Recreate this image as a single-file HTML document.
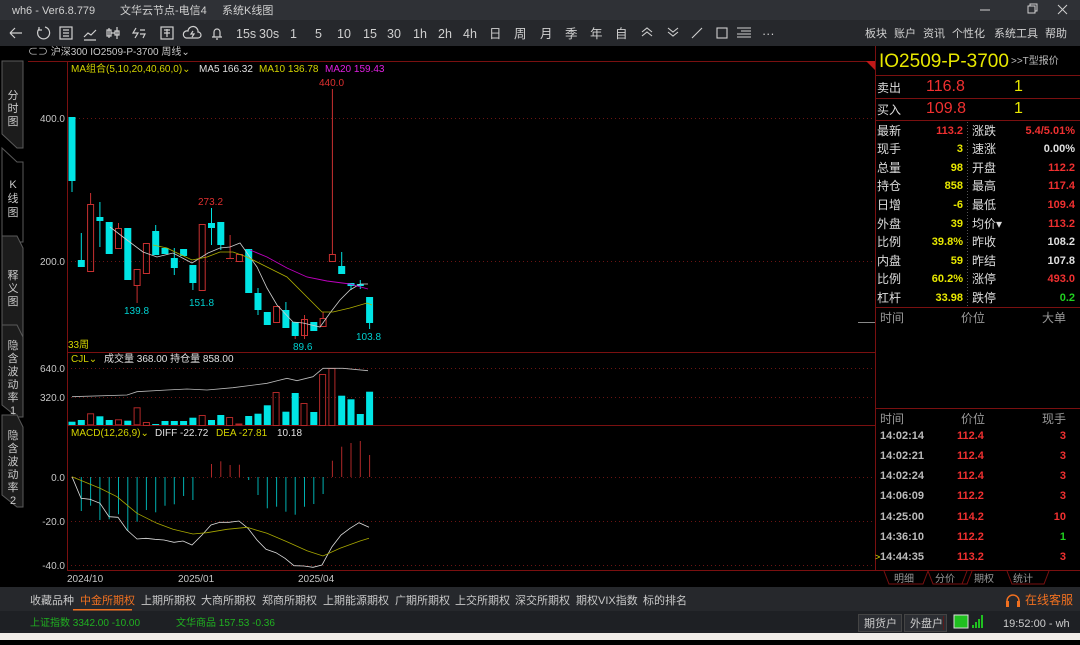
<!DOCTYPE html>
<html><head><meta charset="utf-8"><style>
body{margin:0;width:1080px;height:640px;overflow:hidden;background:#000;font-family:"Liberation Sans","Noto Sans CJK SC",sans-serif}
svg text{font-family:"Liberation Sans","Noto Sans CJK SC",sans-serif}
</style></head><body>
<svg width="1080" height="640" viewBox="0 0 1080 640" xmlns="http://www.w3.org/2000/svg">
<!-- title bar -->
<rect x="0" y="0" width="1080" height="20" fill="#2f3136"/>
<g fill="#d0d0d0" font-size="11">
<text x="12" y="14">wh6  -  Ver6.8.779</text>
<text x="120" y="14">文华云节点-电信4</text>
<text x="222" y="14">系统K线图</text>
</g>
<g stroke="#d0d0d0" fill="none" stroke-width="1">
<line x1="980" y1="10" x2="990" y2="10"/>
<rect x="1028" y="6" width="7" height="7"/><path d="M1030 6V4h7v7h-2"/>
<path d="M1058 5l9 9M1067 5l-9 9"/>
</g>
<!-- toolbar -->
<rect x="0" y="20" width="1080" height="26" fill="#26282c"/>
<g stroke="#d0d0d0" fill="none" stroke-width="1.2">
<path d="M10 33h12M10 33l5-5M10 33l5 5"/>
<path d="M45 27a6 6 0 1 1-6 2M39 27v3h3"/>
<rect x="60" y="27" width="12" height="12"/><path d="M63 30h6M63 33h6M63 36h6"/>
<path d="M84 37l4-4 3 2 5-5M84 40h12"/>
<path d="M109 28v10M107 30h4v6h-4zM117 27v12M115 31h4v4h-4zM111 33h4"/>
<path d="M136 28l-3 5h5l-3 5M140 30h5M140 34h5l-2 4"/>
<rect x="161" y="27" width="12" height="12"/><path d="M164 33h6M167 29v8M164 30h6"/>
<path d="M186 38h12a3 3 0 0 0 0-6 5 5 0 0 0-10-1 3 3 0 0 0-2 7M193 31l-2 3h3l-2 3"/>
<path d="M212 37h10M214 37v-5a3 3 0 0 1 6 0v5M216 39h2"/>
</g>
<g fill="#d0d0d0" font-size="12.5">
<text x="236" y="38">15s</text><text x="259" y="38">30s</text><text x="290" y="38">1</text><text x="315" y="38">5</text>
<text x="337" y="38">10</text><text x="363" y="38">15</text><text x="387" y="38">30</text><text x="413" y="38">1h</text>
<text x="438" y="38">2h</text><text x="463" y="38">4h</text><text x="489" y="38">日</text><text x="514" y="38">周</text>
<text x="540" y="38">月</text><text x="565" y="38">季</text><text x="590" y="38">年</text><text x="615" y="38">自</text>
<text x="762" y="38">···</text>
</g>
<g stroke="#d0d0d0" fill="none" stroke-width="1.1">
<path d="M642 32l5-4 5 4M642 36l5-4 5 4"/><path d="M668 28l5 4 5-4M668 32l5 4 5-4"/>
<path d="M692 38l10-10"/><rect x="717" y="28" width="10" height="10"/><path d="M737 28h14M741 31h10M737 34h14M737 37h14"/>
</g>
<g fill="#d0d0d0" font-size="11">
<text x="865" y="37">板块</text><text x="894" y="37">账户</text><text x="923" y="37">资讯</text><text x="952" y="37">个性化</text><text x="994" y="37">系统工具</text><text x="1045" y="37">帮助</text>
</g>
<!-- left tabs -->
<g stroke="#5a5a5a" fill="#1c1c1c" stroke-width="1">
<path d="M2 61h21v87h-6l-15-14z"/>
<path d="M2 148l15 14h6v80l-21 0z" fill="#000"/>
<path d="M2 236l0 90 15 12h6v-90l-6-12z"/>
<path d="M2 325v80l15 12h6v-80l-6-12z"/>
<path d="M2 415v80l15 12h6v-80l-6-12z"/>
</g>
<g fill="#c8c8c8" font-size="11" text-anchor="middle">
<text x="13" y="99">分</text><text x="13" y="112">时</text><text x="13" y="125">图</text>
<text x="13" y="188">K</text><text x="13" y="202">线</text><text x="13" y="216">图</text>
<text x="13" y="279">释</text><text x="13" y="292">义</text><text x="13" y="305">图</text>
<text x="13" y="349">隐</text><text x="13" y="362">含</text><text x="13" y="375">波</text><text x="13" y="388">动</text><text x="13" y="401">率</text><text x="13" y="414">1</text>
<text x="13" y="439">隐</text><text x="13" y="452">含</text><text x="13" y="465">波</text><text x="13" y="478">动</text><text x="13" y="491">率</text><text x="13" y="504">2</text>
</g>
<!-- chart frame -->
<g stroke="#7a1010" fill="none" stroke-width="1">
<line x1="28" y1="61.5" x2="875" y2="61.5"/>
<line x1="67.5" y1="61" x2="67.5" y2="571"/>
<line x1="67" y1="352.5" x2="875" y2="352.5"/>
<line x1="67" y1="425.5" x2="875" y2="425.5"/>
<line x1="67" y1="570.5" x2="875" y2="570.5"/>
<line x1="875.5" y1="46" x2="875.5" y2="571"/>
</g>
<path d="M866 61h9v9z" fill="#c01818"/>
<g stroke="#6a1414" stroke-dasharray="1 3" stroke-width="1">
<line x1="67" y1="118.5" x2="875" y2="118.5"/><line x1="67" y1="261.5" x2="875" y2="261.5"/>
<line x1="67" y1="368.5" x2="875" y2="368.5"/><line x1="67" y1="397.5" x2="875" y2="397.5"/>
<line x1="67" y1="477.5" x2="875" y2="477.5"/><line x1="67" y1="521.5" x2="875" y2="521.5"/><line x1="67" y1="565.5" x2="875" y2="565.5"/>
</g>
<line x1="858" y1="322.5" x2="875" y2="322.5" stroke="#888"/>
<g fill="#c8c8c8" font-size="10" text-anchor="end">
<text x="65" y="122">400.0</text><text x="65" y="265">200.0</text><text x="65" y="372">640.0</text><text x="65" y="401">320.0</text>
<text x="65" y="481">0.0</text><text x="65" y="525">-20.0</text><text x="65" y="569">-40.0</text>
</g>
<g fill="#c8c8c8" font-size="10"><text x="67" y="582">2024/10</text><text x="178" y="582">2025/01</text><text x="298" y="582">2025/04</text></g>
<g font-size="10">
<text x="28" y="55" fill="#c8c8c8">⊂⊃ 沪深300  IO2509-P-3700   周线⌄</text>
<text x="71" y="72" fill="#d4d400">MA组合(5,10,20,40,60,0)⌄</text>
<text x="199" y="72" fill="#e0e0e0">MA5 166.32</text>
<text x="259" y="72" fill="#d4d400">MA10 136.78</text>
<text x="325" y="72" fill="#e020e0">MA20 159.43</text>
<text x="68" y="348" fill="#d4d400">33周</text>
<text x="71" y="362" fill="#d4d400">CJL⌄</text><text x="104" y="362" fill="#e0e0e0">成交量 368.00  持仓量 858.00</text>
<text x="71" y="436" fill="#d4d400">MACD(12,26,9)⌄</text><text x="155" y="436" fill="#e0e0e0">DIFF -22.72</text>
<text x="216" y="436" fill="#d4d400">DEA -27.81</text><text x="277" y="436" fill="#e0e0e0">10.18</text>
<text x="319" y="86" fill="#e03030">440.0</text><text x="198" y="205" fill="#e03030">273.2</text>
<text x="124" y="314" fill="#00d0d0">139.8</text><text x="189" y="306" fill="#00d0d0">151.8</text>
<text x="293" y="350" fill="#00d0d0">89.6</text><text x="356" y="340" fill="#00d0d0">103.8</text>
</g>
<!-- wicks -->
<g stroke-width="1">
<g stroke="#00e0e0">
<line x1="72" y1="117" x2="72" y2="192"/><line x1="81.3" y1="233" x2="81.3" y2="260"/><line x1="99.9" y1="202" x2="99.9" y2="247"/>
<line x1="155.7" y1="225" x2="155.7" y2="240"/><line x1="174.3" y1="248" x2="174.3" y2="275"/><line x1="192.9" y1="283" x2="192.9" y2="290"/>
<line x1="211.5" y1="208" x2="211.5" y2="245"/><line x1="220.8" y1="245" x2="220.8" y2="250"/>
<line x1="258" y1="288" x2="258" y2="315"/><line x1="285.9" y1="302" x2="285.9" y2="310"/><line x1="341.7" y1="252" x2="341.7" y2="266"/>
<line x1="351" y1="283" x2="351" y2="290"/><line x1="360.3" y1="280" x2="360.3" y2="289"/><line x1="369.6" y1="323" x2="369.6" y2="329"/>
</g>
<g stroke="#c83030">
<line x1="90.6" y1="193" x2="90.6" y2="204"/><line x1="118.5" y1="223" x2="118.5" y2="228"/><line x1="137.1" y1="285" x2="137.1" y2="303"/>
<line x1="230.1" y1="235" x2="230.1" y2="258"/><line x1="295.2" y1="336" x2="295.2" y2="339"/><line x1="304.5" y1="315" x2="304.5" y2="339"/>
<line x1="323.1" y1="312" x2="323.1" y2="318"/><line x1="332.4" y1="89" x2="332.4" y2="254"/>
</g>
</g>
<!-- cyan bodies -->
<g fill="#00e5e5">
<rect x="68.5" y="117" width="7" height="64"/><rect x="77.8" y="260" width="7" height="7"/><rect x="96.4" y="217" width="7" height="4"/>
<rect x="105.7" y="222" width="7" height="32"/><rect x="124.3" y="228" width="7" height="52"/><rect x="152.2" y="231" width="7" height="24"/>
<rect x="161.5" y="248" width="7" height="6"/><rect x="170.8" y="258" width="7" height="10"/><rect x="180.1" y="249" width="7" height="7"/>
<rect x="189.4" y="265" width="7" height="18"/><rect x="208" y="223" width="7" height="5"/><rect x="217.3" y="222" width="7" height="23"/>
<rect x="245.2" y="249" width="7" height="44"/><rect x="254.5" y="293" width="7" height="17"/><rect x="263.8" y="312" width="7" height="13"/>
<rect x="282.4" y="310" width="7" height="18"/><rect x="291.7" y="322" width="7" height="14"/><rect x="310.3" y="322" width="7" height="9"/>
<rect x="338.2" y="266" width="7" height="8"/><rect x="347.5" y="283" width="7" height="3"/><rect x="356.8" y="284" width="7" height="2"/>
<rect x="366.1" y="297" width="7" height="26"/>
</g>
<g fill="none" stroke="#c83030">
<rect x="87.6" y="204.5" width="6" height="67"/><rect x="115.5" y="228.5" width="6" height="20"/><rect x="134.1" y="269.5" width="6" height="16"/>
<rect x="143.4" y="243.5" width="6" height="30"/><rect x="199.2" y="224.5" width="6" height="66"/><line x1="226" y1="258.5" x2="234" y2="258.5"/>
<rect x="236.4" y="254.5" width="6" height="7"/><rect x="273.6" y="306.5" width="6" height="16"/><rect x="301.5" y="319.5" width="6" height="16"/>
<rect x="320.1" y="318.5" width="6" height="8"/><rect x="329.4" y="254.5" width="6" height="7"/>
</g>
<!-- MAs -->
<polyline fill="none" stroke="#cfcfcf" stroke-width="0.8" points="110,227 127,240 143,252 157,257 173,253 192,263 208,253 220,248 230,247 240,243 257,267 267,288 277,305 293,322 303,323 320,327 330,313 340,300 350,290 360,284 368,284"/>
<polyline fill="none" stroke="#b0b000" stroke-width="0.8" points="153,245 167,248 175,252 192,260 207,257 220,252 233,252 247,257 267,267 287,277 307,297 322,312 333,312 350,308 367,303 372,305"/>
<polyline fill="none" stroke="#c000c0" stroke-width="0.9" points="250,250 267,257 287,268 307,277 327,281 350,284 368,289"/>
<!-- volume -->
<g fill="#00e5e5">
<rect x="68.5" y="421.7" width="7" height="3.3"/><rect x="77.8" y="420" width="7" height="5"/><rect x="96.4" y="416.3" width="7" height="8.7"/>
<rect x="105.7" y="420" width="7" height="5"/><rect x="124.3" y="420.7" width="7" height="4.3"/><rect x="152.2" y="424" width="7" height="1"/>
<rect x="161.5" y="421" width="7" height="4"/><rect x="170.8" y="421" width="7" height="4"/><rect x="180.1" y="421" width="7" height="4"/>
<rect x="189.4" y="417.7" width="7" height="7.3"/><rect x="208" y="420" width="7" height="5"/><rect x="217.3" y="415" width="7" height="10"/>
<rect x="245.2" y="416" width="7" height="9"/><rect x="254.5" y="413.7" width="7" height="11.3"/><rect x="263.8" y="405.3" width="7" height="19.7"/>
<rect x="282.4" y="411.7" width="7" height="13.3"/><rect x="291.7" y="393" width="7" height="32"/><rect x="310.3" y="412" width="7" height="13"/>
<rect x="338.2" y="395.7" width="7" height="29.3"/><rect x="347.5" y="399.3" width="7" height="25.7"/><rect x="356.8" y="414" width="7" height="11"/>
<rect x="366.1" y="391.7" width="7" height="33.3"/>
</g>
<g fill="none" stroke="#b02828">
<rect x="87.6" y="413.8" width="6" height="11"/><rect x="115.5" y="419.8" width="6" height="5"/><rect x="134.1" y="407.8" width="6" height="17"/>
<rect x="143.4" y="422.5" width="6" height="3"/><rect x="199.2" y="415.5" width="6" height="10"/><rect x="226.6" y="417.5" width="6" height="8"/>
<rect x="235.9" y="424" width="6" height="1"/><rect x="273.1" y="392.5" width="6" height="33"/><rect x="301" y="403.5" width="6" height="22"/>
<rect x="319.6" y="374.5" width="6" height="51"/><rect x="328.9" y="368.5" width="6" height="57"/>
</g>
<polyline fill="none" stroke="#bbb" stroke-width="0.8" points="72,396.7 127,395 137,391.7 167,390 187,389 207,390 233,387.7 267,383.3 287,378.3 297,380.7 313,376.7 323,368.3 343,368.3 368,370.7"/>
<!-- MACD hist -->
<g stroke="#00b0b0" stroke-width="1">
<line x1="81.3" y1="477" x2="81.3" y2="511"/><line x1="90.6" y1="477" x2="90.6" y2="505.7"/><line x1="99.9" y1="477" x2="99.9" y2="520"/>
<line x1="109.2" y1="477" x2="109.2" y2="519.3"/><line x1="118.5" y1="477" x2="118.5" y2="514.3"/><line x1="127.8" y1="477" x2="127.8" y2="530.7"/>
<line x1="137.1" y1="477" x2="137.1" y2="521.7"/><line x1="146.4" y1="477" x2="146.4" y2="510"/><line x1="155.7" y1="477" x2="155.7" y2="512.3"/>
<line x1="165" y1="477" x2="165" y2="505.7"/><line x1="174.3" y1="477" x2="174.3" y2="504.3"/><line x1="183.6" y1="477" x2="183.6" y2="496"/>
<line x1="192.9" y1="477" x2="192.9" y2="500"/><line x1="248.7" y1="477" x2="248.7" y2="480"/><line x1="258" y1="477" x2="258" y2="495"/>
<line x1="267.3" y1="477" x2="267.3" y2="508.3"/><line x1="276.6" y1="477" x2="276.6" y2="506.7"/><line x1="285.9" y1="477" x2="285.9" y2="511.7"/>
<line x1="295.2" y1="477" x2="295.2" y2="514.7"/><line x1="304.5" y1="477" x2="304.5" y2="506.7"/><line x1="313.8" y1="477" x2="313.8" y2="504"/>
<line x1="323.1" y1="477" x2="323.1" y2="494"/>
</g>
<g stroke="#b02828" stroke-width="1">
<line x1="211.5" y1="477" x2="211.5" y2="464"/><line x1="220.8" y1="477" x2="220.8" y2="461.3"/><line x1="230.1" y1="477" x2="230.1" y2="465"/>
<line x1="239.4" y1="477" x2="239.4" y2="464.7"/><line x1="332.4" y1="477" x2="332.4" y2="460.7"/><line x1="341.7" y1="477" x2="341.7" y2="446.7"/>
<line x1="351" y1="477" x2="351" y2="443"/><line x1="360.3" y1="477" x2="360.3" y2="441"/><line x1="369.6" y1="477" x2="369.6" y2="455"/>
</g>
<polyline fill="none" stroke="#ddd" stroke-width="0.8" points="72,476.7 81,498.3 90,499.3 100,503.3 109,516.7 118,517.3 127,530 137,539 146,538.3 155,539.3 164,540 174,542.3 183,541 192,545 202,535 211,525 220,522.3 229,522.3 239,521 248,528.3 257,540 266,549.3 276,552.7 285,558.3 294,565.7 304,566 313,567.3 322,565 332,546.7 341,535 350,528.3 359,522.7 369,527.3"/>
<polyline fill="none" stroke="#a8a800" stroke-width="0.8" points="72,476.7 100,488.3 117,496.7 137,513.3 157,523.3 173,529.3 193,534 207,532.7 227,529.3 247,527.3 267,533.3 287,541.7 307,550.7 323,556 340,548.3 360,541 369,538.3"/>
<!-- right panel -->
<rect x="876" y="46" width="204" height="525" fill="#000"/>
<text x="879" y="67" fill="#e8e800" font-size="19">IO2509-P-3700</text>
<text x="1011" y="64" fill="#bbb" font-size="10">&gt;&gt;T型报价</text>
<g stroke="#7a1010" fill="none"><line x1="876" y1="75.5" x2="1080" y2="75.5"/><line x1="876" y1="98.5" x2="1080" y2="98.5"/><line x1="876" y1="120.5" x2="1080" y2="120.5"/><line x1="876" y1="307.5" x2="1080" y2="307.5"/><line x1="876" y1="408.5" x2="1080" y2="408.5"/><line x1="876" y1="570.5" x2="1080" y2="570.5"/></g>
<line x1="967.5" y1="122" x2="967.5" y2="306" stroke="#555" stroke-dasharray="1 2"/>
<g font-size="12"><text x="877" y="92" fill="#ddd">卖出</text><text x="877" y="114" fill="#ddd">买入</text></g>
<g font-size="16" fill="#f03030"><text x="926" y="91">116.8</text><text x="926" y="113">109.8</text></g>
<g font-size="16" fill="#e8e800"><text x="1014" y="91">1</text><text x="1014" y="113">1</text></g>
<g font-size="12" fill="#ddd">
<text x="877" y="135">最新</text><text x="877" y="153">现手</text><text x="877" y="172">总量</text><text x="877" y="190">持仓</text><text x="877" y="209">日增</text>
<text x="877" y="228">外盘</text><text x="877" y="246">比例</text><text x="877" y="265">内盘</text><text x="877" y="283">比例</text><text x="877" y="302">杠杆</text>
<text x="972" y="135">涨跌</text><text x="972" y="153">速涨</text><text x="972" y="172">开盘</text><text x="972" y="190">最高</text><text x="972" y="209">最低</text>
<text x="972" y="228">均价▾</text><text x="972" y="246">昨收</text><text x="972" y="265">昨结</text><text x="972" y="283">涨停</text><text x="972" y="302">跌停</text>
</g>
<g font-size="11" font-weight="bold" text-anchor="end">
<text x="963" y="134" fill="#f03030">113.2</text><text x="963" y="152" fill="#e8e800">3</text><text x="963" y="171" fill="#e8e800">98</text><text x="963" y="189" fill="#e8e800">858</text>
<text x="963" y="208" fill="#e8e800">-6</text><text x="963" y="227" fill="#e8e800">39</text><text x="963" y="245" fill="#e8e800">39.8%</text><text x="963" y="264" fill="#e8e800">59</text>
<text x="963" y="282" fill="#e8e800">60.2%</text><text x="963" y="301" fill="#e8e800">33.98</text>
<text x="1075" y="134" fill="#f03030">5.4/5.01%</text><text x="1075" y="152" fill="#e0e0e0">0.00%</text><text x="1075" y="171" fill="#f03030">112.2</text>
<text x="1075" y="189" fill="#f03030">117.4</text><text x="1075" y="208" fill="#f03030">109.4</text><text x="1075" y="227" fill="#f03030">113.2</text>
<text x="1075" y="245" fill="#e0e0e0">108.2</text><text x="1075" y="264" fill="#e0e0e0">107.8</text><text x="1075" y="282" fill="#f03030">493.0</text><text x="1075" y="301" fill="#20d020">0.2</text>
</g>
<g font-size="12" fill="#999"><text x="880" y="322">时间</text><text x="961" y="322">价位</text><text x="1042" y="322">大单</text>
<text x="880" y="423">时间</text><text x="961" y="423">价位</text><text x="1042" y="423">现手</text></g>
<g font-size="11" font-weight="bold">
<g fill="#bbb"><text x="880" y="439">14:02:14</text><text x="880" y="459">14:02:21</text><text x="880" y="479">14:02:24</text><text x="880" y="499">14:06:09</text><text x="880" y="520">14:25:00</text><text x="880" y="540">14:36:10</text><text x="880" y="560">14:44:35</text></g>
<g fill="#f03030"><text x="957" y="439">112.4</text><text x="957" y="459">112.4</text><text x="957" y="479">112.4</text><text x="957" y="499">112.2</text><text x="957" y="520">114.2</text><text x="957" y="540">112.2</text><text x="957" y="560">113.2</text></g>
<g text-anchor="end"><text x="1066" y="439" fill="#f03030">3</text><text x="1066" y="459" fill="#f03030">3</text><text x="1066" y="479" fill="#f03030">3</text><text x="1066" y="499" fill="#f03030">3</text><text x="1066" y="520" fill="#f03030">10</text><text x="1066" y="540" fill="#20d020">1</text><text x="1066" y="560" fill="#f03030">3</text></g>
</g>
<text x="875" y="560" fill="#e8e800" font-size="9">&gt;</text>
<g stroke="#7a1010" fill="none"><path d="M884 571l5 13h34l5-13M928 571l-5 13M928 571l5 13h34l5-13M967 571l-5 13M1007 571l5 13h32l5-13"/></g>
<g font-size="10" fill="#999"><text x="894" y="582">明细</text><text x="935" y="582">分价</text><text x="974" y="582">期权</text><text x="1013" y="582">统计</text></g>
<!-- bottom tabs -->
<rect x="0" y="587" width="1080" height="24" fill="#26282c"/>
<g font-size="11" fill="#c8c8c8">
<text x="30" y="604">收藏品种</text><text x="80" y="604" fill="#f07020">中金所期权</text><text x="141" y="604">上期所期权</text><text x="201" y="604">大商所期权</text>
<text x="262" y="604">郑商所期权</text><text x="323" y="604">上期能源期权</text><text x="395" y="604">广期所期权</text><text x="455" y="604">上交所期权</text>
<text x="515" y="604">深交所期权</text><text x="576" y="604">期权VIX指数</text><text x="643" y="604">标的排名</text>
<text x="1025" y="604" fill="#f07020" font-size="12">在线客服</text>
</g>
<rect x="73" y="609" width="59" height="1.5" fill="#f07020"/>
<path d="M1007 605v-4a6 6 0 0 1 12 0v4" fill="none" stroke="#f07020" stroke-width="1.5"/><rect x="1006" y="601" width="3" height="6" fill="#f07020"/><rect x="1017" y="601" width="3" height="6" fill="#f07020"/>
<!-- status bar -->
<rect x="0" y="611" width="1080" height="22" fill="#1e2024"/>
<g font-size="10" fill="#20b020"><text x="30" y="626">上证指数  3342.00  -10.00</text><text x="176" y="626">文华商品  157.53  -0.36</text></g>
<rect x="858.5" y="614.5" width="43" height="17" fill="#2c2e33" stroke="#444"/><rect x="904.5" y="614.5" width="42" height="17" fill="#2c2e33" stroke="#444"/>
<g font-size="11" fill="#ccc"><text x="864" y="627">期货户</text><text x="910" y="627">外盘户</text><text x="1003" y="627">19:52:00 - wh</text></g>
<line x1="943.5" y1="616" x2="943.5" y2="630" stroke="#5a1a1a"/>
<rect x="954" y="615" width="14" height="13" fill="#20c020" stroke="#ddd"/>
<g fill="#20c020"><rect x="972" y="625" width="2" height="3"/><rect x="975" y="622" width="2" height="6"/><rect x="978" y="619" width="2" height="9"/><rect x="981" y="615" width="2" height="13"/></g>
<rect x="0" y="633" width="1080" height="7" fill="#f0ece8"/>
</svg>
</body></html>
